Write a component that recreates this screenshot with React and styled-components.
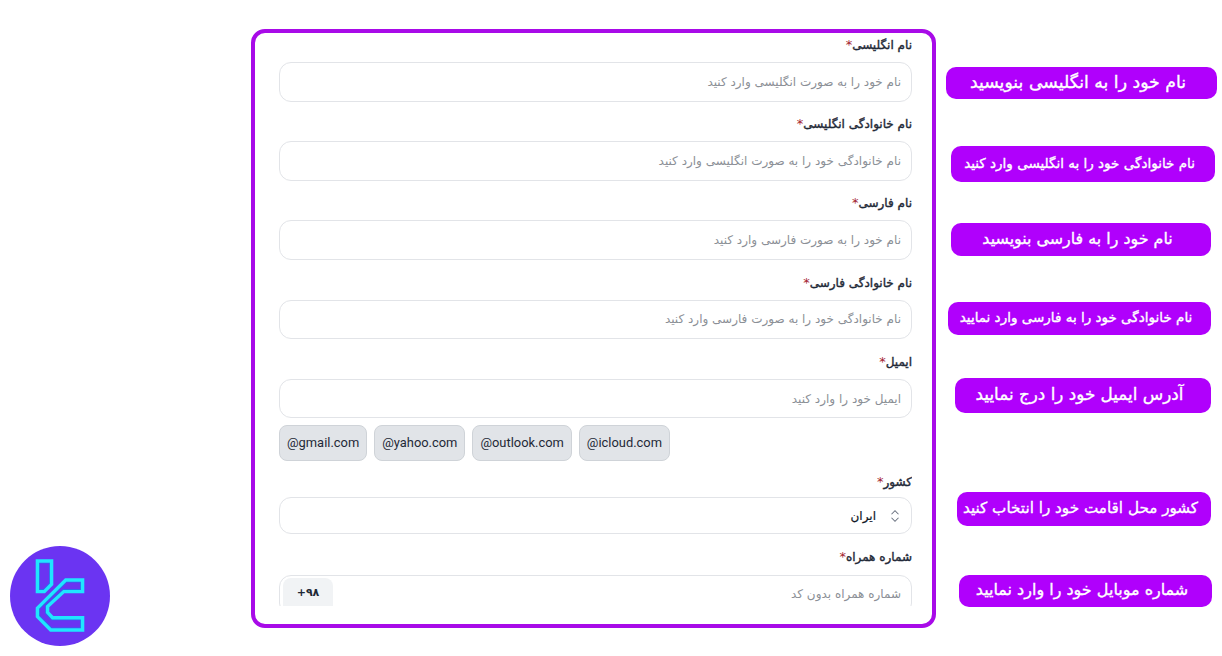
import styled, { createGlobalStyle } from "styled-components";

const GlobalStyle = createGlobalStyle`
	html, body {
		margin: 0;
		padding: 0;
		background: #ffffff;
	}
	body {
		font-family: "DejaVu Sans", "Noto Sans", sans-serif;
	}
`;

const fields = [
	{ label: "نام انگلیسی", hint: "نام خود را به صورت انگلیسی وارد کنید" },
	{ label: "نام خانوادگی انگلیسی", hint: "نام خانوادگی خود را به صورت انگلیسی وارد کنید" },
	{ label: "نام فارسی", hint: "نام خود را به صورت فارسی وارد کنید" },
	{ label: "نام خانوادگی فارسی", hint: "نام خانوادگی خود را به صورت فارسی وارد کنید" },
	{ label: "ایمیل", hint: "ایمیل خود را وارد کنید" },
];

const domains = ["@gmail.com", "@yahoo.com", "@outlook.com", "@icloud.com"];

const notes = [
	{ text: "نام خود را به انگلیسی بنویسید", top: 67, left: 0, width: 271, height: 32, size: 17.3 },
	{ text: "نام خانوادگی خود را به انگلیسی وارد کنید", top: 47, left: 5, width: 264, height: 36, size: 13.5 },
	{ text: "نام خود را به فارسی بنویسید", top: 41, left: 5, width: 260, height: 33, size: 15.9 },
	{ text: "نام خانوادگی خود را به فارسی وارد نمایید", top: 46, left: 2, width: 263, height: 33, size: 13.5 },
	{ text: "آدرس ایمیل خود را درج نمایید", top: 43, left: 9, width: 256, height: 35, size: 16.8 },
	{ text: "کشور محل اقامت خود را انتخاب کنید", top: 79, left: 11, width: 254, height: 34, size: 15.2 },
	{ text: "شماره موبایل خود را وارد نمایید", top: 49, left: 13, width: 253, height: 32, size: 16 },
];

const Logo = () => (
	<LogoSvg viewBox="0 0 100 100">
		<circle cx="50" cy="50" r="50" fill="#6b34f2" />
		<g fill="none" stroke="#2b6bef" strokeWidth="1.2">
			<path d="M29.4 17H39.6V37.5L33.5 43.6H29.4Z" />
			<path d="M70.6 36H56.5L29.4 62.9V69.8L41.5 82H70.6V73.7H41.7L35.6 67.2V59.8L53 43.6H70.6Z" />
		</g>
		<g fill="none" stroke="#1fe6ff" strokeWidth="3.4">
			<path d="M27.4 15H41.6V38.3L34.3 45.6H27.4Z" />
			<path d="M72.6 34H55.7L27.4 62.1V70.6L40.7 84H72.6V71.7H42.6L37.6 66.4V60.6L53.8 45.6H72.6Z" />
		</g>
	</LogoSvg>
);

const App = () => {
	return (
		<Page>
			<GlobalStyle />
			<LogoColumn>
				<Logo />
			</LogoColumn>
			<Card>
				<Form dir="rtl">
					{fields.map((field) => (
						<Field key={field.label}>
							<Label>
								{field.label}
								<Star>*</Star>
							</Label>
							<InputBox>{field.hint}</InputBox>
						</Field>
					))}
					<Chips dir="ltr">
						{domains.map((domain) => (
							<Chip key={domain}>{domain}</Chip>
						))}
					</Chips>
					<Field>
						<Label $gap={3}>
							کشور<Star>*</Star>
						</Label>
						<SelectBox>
							<Chevrons viewBox="0 0 16 20">
								<path d="M4 8l4-4 4 4M4 12l4 4 4-4" />
							</Chevrons>
							<SelectValue>ایران</SelectValue>
						</SelectBox>
					</Field>
					<Field>
						<Label $gap={6}>
							شماره همراه<Star>*</Star>
						</Label>
						<PhoneBox>
							<PhoneHint>شماره همراه بدون کد</PhoneHint>
							<Prefix dir="ltr">+۹۸</Prefix>
						</PhoneBox>
					</Field>
				</Form>
			</Card>
			<Notes>
				{notes.map((note) => (
					<Note
						key={note.text}
						dir="rtl"
						$top={note.top}
						$left={note.left}
						$width={note.width}
						$height={note.height}
						$size={note.size}
					>
						{note.text}
					</Note>
				))}
			</Notes>
		</Page>
	);
};

const Page = styled.div`
	display: flex;
	width: 1222px;
	height: 656px;
	overflow: hidden;
	background: #ffffff;
`;

const LogoColumn = styled.div`
	width: 251px;
	flex: none;
	display: flex;
	align-items: flex-end;
	padding: 0 0 10px 10px;
	box-sizing: border-box;
`;

const LogoSvg = styled.svg`
	width: 100px;
	height: 100px;
`;

const Card = styled.div`
	width: 685px;
	height: 599px;
	margin-top: 29px;
	flex: none;
	box-sizing: border-box;
	border: 4px solid #a80ae8;
	border-radius: 14px;
	padding: 0 20px 18px 24px;
	background: #ffffff;
`;

const Form = styled.div`
	height: 100%;
	overflow: hidden;
	display: flex;
	flex-direction: column;
`;

const Field = styled.div`
	flex: none;
	display: flex;
	flex-direction: column;
	margin-bottom: 10.7px;
`;

const Label = styled.div`
	height: 24px;
	margin-bottom: ${(p) => p.$gap ?? 5}px;
	font-size: 12px;
	-webkit-text-stroke: 0.4px #1f2937;
	line-height: 24px;
	color: #1f2937;
`;

const Star = styled.span`
	color: #a3222e;
	-webkit-text-stroke: 0;
	font-size: 13px;
`;

const InputBox = styled.div`
	box-sizing: border-box;
	height: 39.5px;
	padding: 0 10px;
	display: flex;
	align-items: center;
	border: 1px solid #e2e4e8;
	border-radius: 12px;
	font-size: 12px;
	color: #8b8f96;
`;

const Chips = styled.div`
	flex: none;
	display: flex;
	gap: 7px;
	margin-top: -3.7px;
	margin-bottom: 9px;
`;

const Chip = styled.div`
	box-sizing: border-box;
	height: 36px;
	padding: 0 7px 2px;
	display: flex;
	align-items: center;
	background: #e1e4e8;
	border: 1px solid #cfd3d8;
	border-radius: 8px;
	font-family: "Roboto", sans-serif;
	font-size: 12.9px;
	color: #1f2937;
`;

const SelectBox = styled(InputBox)`
	height: 37px;
	gap: 12px;
	padding-right: 9px;
	color: #111827;
`;

const SelectValue = styled.span`
	-webkit-text-stroke: 0.2px #111827;
`;

const Chevrons = styled.svg`
	width: 14px;
	height: 18px;
	fill: none;
	stroke: #6b7280;
	stroke-width: 1.2;
`;

const PhoneBox = styled(InputBox)`
	justify-content: space-between;
	align-items: flex-start;
	padding: 2px 10px 0 3px;
	height: 40px;
`;

const PhoneHint = styled.span`
	line-height: 32px;
`;

const Prefix = styled.div`
	width: 50px;
	height: 36px;
	padding-top: 8px;
	box-sizing: border-box;
	text-align: center;
	background: #f1f3f5;
	border-radius: 8px;
	font-size: 11px;
	line-height: 14px;
	font-weight: 700;
	color: #1f2937;
`;

const Notes = styled.div`
	margin-left: 10px;
	flex: none;
	width: 276px;
	display: flex;
	flex-direction: column;
	align-items: flex-start;
`;

const Note = styled.div`
	flex: none;
	box-sizing: border-box;
	width: ${(p) => p.$width}px;
	height: ${(p) => p.$height}px;
	margin-top: ${(p) => p.$top}px;
	margin-left: ${(p) => p.$left}px;
	padding: 0 7px 3px 0;
	display: flex;
	align-items: center;
	justify-content: center;
	background: #b000fc;
	border-radius: 10px;
	font-size: ${(p) => p.$size}px;
	-webkit-text-stroke: 0.35px #ffffff;
	color: #ffffff;
	white-space: nowrap;
`;

export default App;
